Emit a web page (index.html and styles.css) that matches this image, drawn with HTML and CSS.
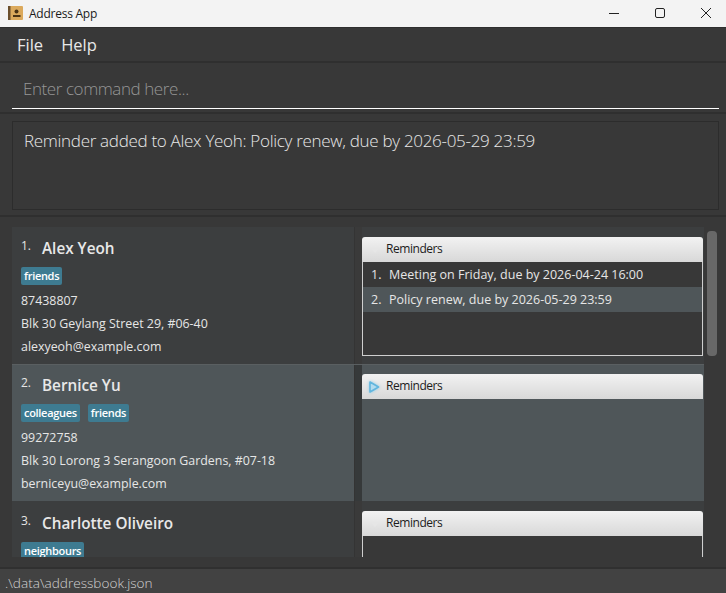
FILE: index.html
```html
<!DOCTYPE html>
<html lang="en">

<head>
    <meta charset="utf-8">
    <title>Address App</title>
    <link rel="stylesheet" href="styles.css">
</head>

<body>
    <div class="window">
        <div class="titlebar">
            <svg class="app-icon" width="15" height="15" viewBox="0 0 15 15">
                <rect x="0" y="0" width="15" height="14" rx="1" fill="#dba95c"/>
                <rect x="0" y="0" width="2.5" height="14" fill="#6b4f2c"/>
                <circle cx="8.5" cy="5.5" r="2" fill="#4a3214"/>
                <rect x="5" y="9" width="7.5" height="2" fill="#4a3214"/>
            </svg>
            <span class="app-name">Address App</span>
            <div class="window-buttons">
                <svg width="12" height="12" viewBox="0 0 12 12"><path d="M1 6.5H11" stroke="#222" stroke-width="1" fill="none"/></svg>
                <svg width="12" height="12" viewBox="0 0 12 12"><rect x="1.5" y="1.5" width="9" height="9" rx="1.5" stroke="#222" stroke-width="1" fill="none"/></svg>
                <svg width="12" height="12" viewBox="0 0 12 12"><path d="M1 1L11 11M11 1L1 11" stroke="#222" stroke-width="1" fill="none"/></svg>
            </div>
        </div>

        <div class="menubar">
            <span>File</span>
            <span>Help</span>
        </div>

        <div class="command-pane">
            <div class="command-box">Enter command here...</div>
        </div>

        <div class="result-pane">
            <div class="result-box">Reminder added to Alex Yeoh: Policy renew, due by 2026-05-29 23:59</div>
        </div>

        <div class="list-pane">
            <div class="person-list">
                <div class="person-row">
                    <div class="person-info">
                        <div class="person-head"><span class="person-index">1.</span><span class="person-name">Alex Yeoh</span></div>
                        <div class="tags"><span class="tag">friends</span></div>
                        <div class="field">87438807</div>
                        <div class="field">Blk 30 Geylang Street 29, #06-40</div>
                        <div class="field">alexyeoh@example.com</div>
                    </div>
                    <div class="divider"></div>
                    <div class="reminder-cell">
                        <div class="reminders">
                            <div class="reminders-title"><span class="arrow-faint"></span>Reminders</div>
                            <div class="reminders-body">
                                <div class="reminder-item"><span class="reminder-num">1.</span>Meeting on Friday, due by 2026-04-24 16:00</div>
                                <div class="reminder-item alt"><span class="reminder-num">2.</span>Policy renew, due by 2026-05-29 23:59</div>
                            </div>
                        </div>
                    </div>
                </div>

                <div class="person-row selected">
                    <div class="person-info">
                        <div class="person-head"><span class="person-index">2.</span><span class="person-name">Bernice Yu</span></div>
                        <div class="tags"><span class="tag">colleagues</span><span class="tag">friends</span></div>
                        <div class="field">99272758</div>
                        <div class="field">Blk 30 Lorong 3 Serangoon Gardens, #07-18</div>
                        <div class="field">berniceyu@example.com</div>
                    </div>
                    <div class="divider"></div>
                    <div class="reminder-cell">
                        <div class="reminders-title">
                            <svg class="arrow-blue" width="14" height="14" viewBox="0 0 14 14">
                                <path d="M3 2L11.5 7L3 12Z" fill="#b4dcef" stroke="#62b6de" stroke-width="1.6" stroke-linejoin="round"/>
                            </svg>Reminders
                        </div>
                    </div>
                </div>

                <div class="person-row last">
                    <div class="person-info">
                        <div class="person-head"><span class="person-index">3.</span><span class="person-name">Charlotte Oliveiro</span></div>
                        <div class="tags"><span class="tag">neighbours</span></div>
                    </div>
                    <div class="divider"></div>
                    <div class="reminder-cell">
                        <div class="reminders">
                            <div class="reminders-title"><span class="arrow-faint"></span>Reminders</div>
                            <div class="reminders-body"></div>
                        </div>
                    </div>
                </div>
            </div>
            <div class="scrollbar"><div class="scroll-thumb"></div></div>
        </div>

        <div class="statusbar">.\data\addressbook.json</div>
    </div>
</body>

</html>
```

FILE: styles.css
```css
body {
    margin: 0;
    background-color: #383838;
    font-family: "Open Sans", "Noto Sans", sans-serif;
    color: #fff;
}

.window {
    display: flex;
    flex-direction: column;
    height: 593px;
    overflow: hidden;
}

.titlebar {
    display: flex;
    align-items: center;
    flex: none;
    height: 27px;
    padding-left: 8px;
    background-color: #f3f3f3;
    border-bottom: 1px solid #2e2e2e;
    color: #1a1a1a;
    font-size: 12px;
    letter-spacing: -0.25px;
}

.app-icon {
    margin-right: 6px;
}

.window-buttons {
    display: flex;
    gap: 34px;
    margin-left: auto;
    margin-right: 14px;
    margin-top: -1px;
}

.menubar {
    display: flex;
    flex: none;
    gap: 18px;
    align-items: center;
    height: 35px;
    padding-left: 17px;
    border-bottom: 2px solid #2f2f2f;
    font-size: 16.5px;
    color: #e8e8e8;
    box-sizing: border-box;
}

.command-pane {
    flex: none;
    height: 51px;
    padding: 0 7px 0 12px;
    border-bottom: 2px solid #2f2f2f;
    box-sizing: border-box;
}

.command-box {
    height: 46px;
    line-height: 52px;
    padding-left: 11px;
    border-bottom: 1px solid #fff;
    color: #969696;
    font-size: 17px;
    font-weight: 300;
    letter-spacing: -0.42px;
    box-sizing: border-box;
}

.result-pane {
    flex: none;
    height: 103px;
    padding: 7px 7px 0 12px;
    border-bottom: 2px solid #2f2f2f;
    box-sizing: border-box;
}

.result-box {
    height: 89px;
    padding: 6px 11px;
    border: 1px solid #2c2c2c;
    color: #e8e8e8;
    font-size: 17px;
    font-weight: 300;
    letter-spacing: -0.3px;
    line-height: 26px;
    box-sizing: border-box;
}

.list-pane {
    display: flex;
    flex: none;
    height: 350px;
    padding: 10px 0 10px 12px;
    box-sizing: border-box;
}

.person-list {
    flex: none;
    width: 692px;
    height: 330px;
    overflow: hidden;
}

.person-row {
    display: flex;
    height: 137px;
    background-color: #3c3e3f;
    box-sizing: border-box;
}

.person-row.selected {
    background-color: #4f5659;
    border-top: 1px solid #5a5f61;
}

.person-info {
    flex: none;
    width: 342px;
    padding: 9px 0 0 9px;
    box-sizing: border-box;
}

.selected .person-info {
    padding-top: 8px;
}

.last .person-info {
    padding-top: 10px;
}

.person-head {
    display: flex;
    align-items: flex-start;
    height: 26px;
}

.person-index {
    width: 21px;
    padding-top: 1px;
    font-size: 12px;
    color: #e6e6e6;
}

.person-name {
    font-size: 15.3px;
    font-weight: 600;
    color: #e8e8e8;
    line-height: 24px;
}

.tags {
    display: flex;
    gap: 8px;
    margin-top: 5px;
    margin-bottom: 4px;
}

.tag {
    padding: 0 3px;
    height: 18px;
    line-height: 18px;
    background-color: #3e7b91;
    border-radius: 2px;
    font-size: 11px;
    font-weight: 600;
    letter-spacing: -0.3px;
    color: #fff;
}

.field {
    height: 23px;
    line-height: 23px;
    font-size: 12.4px;
    color: #e6e6e6;
}

.divider {
    flex: none;
    width: 8px;
    background-color: #3a3a3a;
    border-left: 1px solid #343434;
    box-sizing: border-box;
}

.selected .divider {
    background-color: #36393a;
}

.reminder-cell {
    flex: none;
    width: 342px;
    padding-top: 10px;
    box-sizing: border-box;
}

.selected .reminder-cell {
    padding-top: 9px;
}

.reminders {
    height: 119px;
    display: flex;
    flex-direction: column;
}

.reminders-title {
    display: flex;
    align-items: center;
    flex: none;
    height: 25px;
    width: 341px;
    background: linear-gradient(#f2f2f2, #d8d8d8);
    border-radius: 3px 3px 0 0;
    color: #1c1c1c;
    font-size: 12px;
    letter-spacing: -0.45px;
    box-sizing: border-box;
    padding: 0 0 2px 24px;
    position: relative;
}

.arrow-blue {
    position: absolute;
    left: 5px;
    top: 6px;
    filter: drop-shadow(0 0 1.5px #8ccbe8);
}

.arrow-faint {
    position: absolute;
    left: 9px;
    top: 11px;
    border-left: 4px solid transparent;
    border-right: 4px solid transparent;
    border-top: 5px solid #e6e6e6;
}

.reminders-body {
    flex: 1;
    width: 341px;
    background-color: #383838;
    border: 1px solid #cfcfcf;
    border-top: none;
    box-sizing: border-box;
}

.reminder-item {
    display: flex;
    height: 25px;
    line-height: 25px;
    padding-left: 8px;
    font-size: 12.5px;
    color: #e6e6e6;
}

.reminder-item.alt {
    background-color: #4f5659;
}

.reminder-num {
    width: 18px;
}

.scrollbar {
    flex: none;
    padding: 0 0 0 3px;
    margin-top: 4px;
}

.scroll-thumb {
    width: 10px;
    height: 125px;
    background-color: #686868;
    border-radius: 4px;
}

.statusbar {
    flex: 1;
    padding-left: 5px;
    background-color: #424242;
    border-top: 2px solid #303030;
    color: #d2d2d2;
    font-size: 13.6px;
    font-weight: 300;
    line-height: 28px;
    box-sizing: border-box;
}
```
